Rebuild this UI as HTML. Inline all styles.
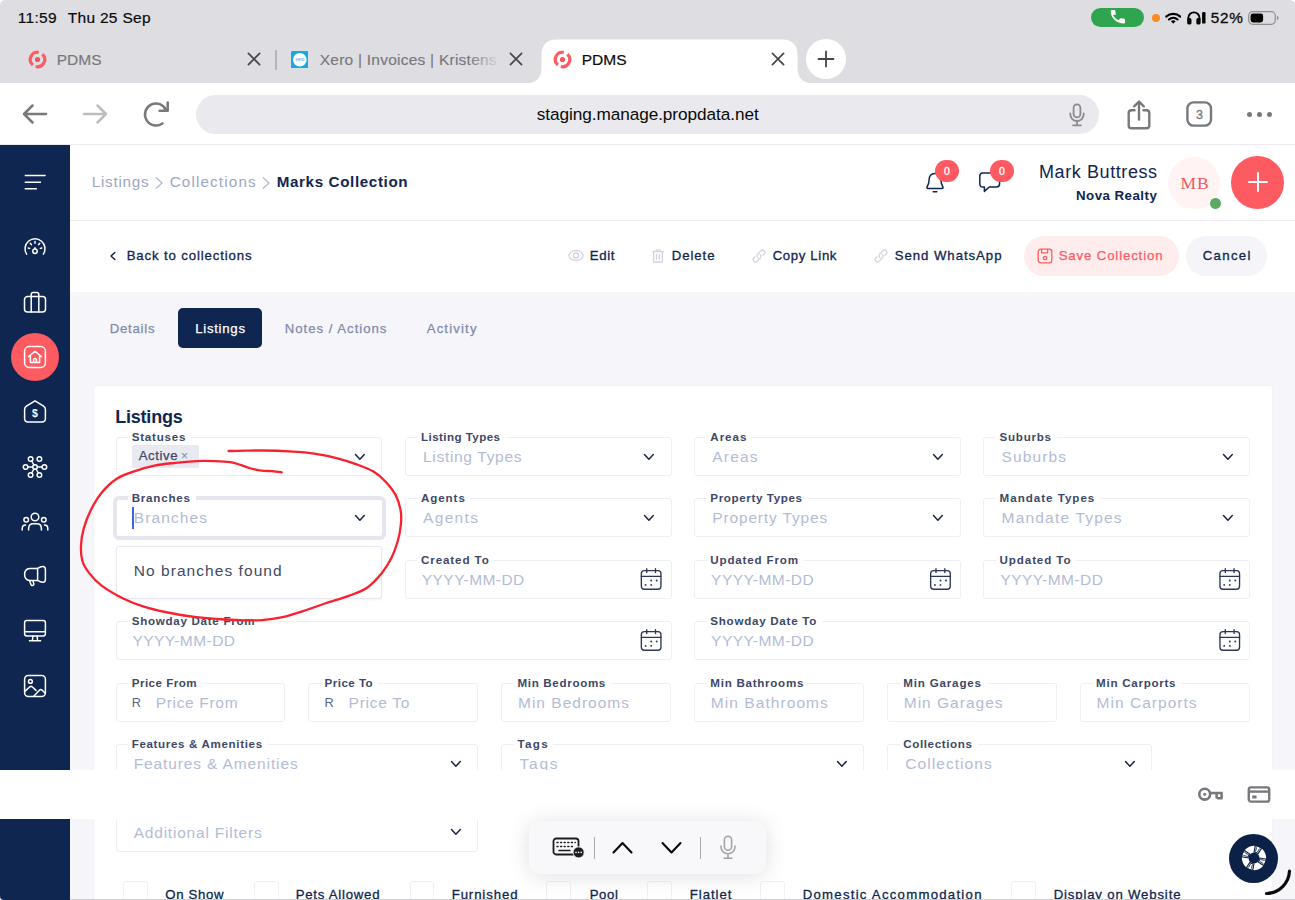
<!DOCTYPE html>
<html lang="en"><head><meta charset="utf-8"><title>PDMS</title>
<style>
*{box-sizing:border-box;margin:0;padding:0}
html,body{width:1295px;height:900px;overflow:hidden;background:#f5f5fa}
body{position:relative;font-family:"Liberation Sans",sans-serif;}
.t{position:absolute;white-space:nowrap;line-height:1;}
.serif{font-family:"Liberation Serif",serif}
.fld{position:absolute;border:1px solid #eeeff5;border-radius:3px;background:#fff}
</style></head><body>
<div style="position:absolute;left:0.00px;top:0.00px;width:1295.00px;height:83.00px;background:#dddde2"></div>
<div style="position:absolute;left:0.00px;top:83.00px;width:1295.00px;height:62.00px;background:#fff"></div>
<div style="position:absolute;left:0.00px;top:144.00px;width:1295.00px;height:1.00px;background:#ebebef"></div>
<div class="t" style="left:17.70px;top:10.00px;font-size:15.50px;color:#0a0a0a;letter-spacing:0.322px;-webkit-text-stroke:0.20px #0a0a0a;">11:59</div>
<div class="t" style="left:67.70px;top:10.00px;font-size:15.50px;color:#0a0a0a;letter-spacing:0.308px;-webkit-text-stroke:0.20px #0a0a0a;">Thu 25 Sep</div>
<div style="position:absolute;left:1091.00px;top:7.50px;width:52.50px;height:19.20px;background:#2fa550;border-radius:10px"></div>
<svg style="position:absolute;left:1110.00px;top:9.50px;" width="15.00" height="15.00" viewBox="0 0 17 16" fill="none"><path d="M6.6 10.8c2.9 5.6 7 9.7 12.600 12.600l4.200-4.200c.5-.5 1.300-.7 2-.4 2.100.7 4.400 1.100 6.800 1.100 1 0 1.900.9 1.900 1.900v6.700c0 1-.9 1.900-1.900 1.900C14.300 30.400 1.600 17.700 1.600 2 1.600 1 2.500.1 3.500.1h6.700c1 0 1.900.9 1.900 1.900 0 2.400.4 4.700 1.100 6.800.2.700 0 1.500-.5 2z" fill="#fff" transform="scale(.5) translate(0,-1)"/></svg>
<div style="position:absolute;left:1152.00px;top:14.00px;width:8.20px;height:8.20px;background:#fb8b1e;border-radius:50%"></div>
<svg style="position:absolute;left:1164.50px;top:11.50px;" width="16.50" height="12.00" viewBox="0 0 16.5 12" fill="none"><path d="M1.200 4.600 A10.500 10.500 0 0 1 15.300 4.600" stroke="#000" stroke-width="2.100" stroke-linecap="round"/><path d="M3.900 7.500 A6.600 6.600 0 0 1 12.600 7.500" stroke="#000" stroke-width="2.100" stroke-linecap="round"/><path d="M8.250 11.700 L5.900 9.300 A3.400 3.400 0 0 1 10.600 9.300 Z" fill="#000"/></svg>
<svg style="position:absolute;left:1186.00px;top:10.00px;" width="21.00" height="16.00" viewBox="0 0 21 16" fill="none"><path d="M2.300 10.500 V8 A5.600 5.600 0 0 1 13.500 8 V10.500" stroke="#000" stroke-width="1.900"/><rect x="1.200" y="8" width="4.300" height="6.600" rx="1.900" fill="#000"/><rect x="10.300" y="8" width="4.300" height="6.600" rx="1.900" fill="#000"/><rect x="16.100" y="2" width="3.400" height="11.600" rx="1.200" fill="#000"/></svg>
<div class="t" style="left:1210.70px;top:10.00px;font-size:15.30px;color:#0a0a0a;letter-spacing:0.747px;-webkit-text-stroke:0.30px #0a0a0a;">52%</div>
<svg style="position:absolute;left:1247.50px;top:11.00px;" width="32.00" height="14.00" viewBox="0 0 32 14" fill="none"><rect x=".7" y=".7" width="26.600" height="12.600" rx="4" stroke="#8e8e93" stroke-width="1.200"/><rect x="2.600" y="2.600" width="12.500" height="8.800" rx="2.400" fill="#000"/><path d="M29 4.800 q1.600.6 1.600 2.200 t-1.600 2.200z" fill="#8e8e93"/></svg>
<svg style="position:absolute;left:520px;top:36px" width="300" height="48" viewBox="520 36 300 48"><path d="M524 83.500 C535 83.500 541.500 79 541.500 68 L541.500 54 C541.500 45.500 547 39.500 556 39.500 L783 39.500 C792 39.500 797.500 45.500 797.500 54 L797.500 68 C797.500 79 804 83.500 815.500 83.500 Z" fill="#fff"/></svg>
<svg style="position:absolute;left:27.80px;top:49.60px;" width="19.00" height="19.00" viewBox="0 0 19 19" fill="none"><path d="M10.750 2.410 A7.200 7.200 0 0 0 4.870 15.020" stroke="#fd5b61" stroke-width="3.200"/><path d="M14.410 4.230 A7.200 7.200 0 0 1 7.760 16.490" stroke="#fd5b61" stroke-width="3.200"/><circle cx="9.500" cy="9.500" r="2.600" fill="#f4555b"/></svg>
<div class="t" style="left:56.70px;top:52.00px;font-size:15.50px;color:#77777c;letter-spacing:0.044px;-webkit-text-stroke:0.15px #77777c;">PDMS</div>
<svg style="position:absolute;left:246.00px;top:51.00px;" width="16.00" height="16.00" viewBox="0 0 16 16" fill="none"><path d="M2.400 2.400 L13.600 13.600 M13.600 2.400 L2.400 13.600" stroke="#45454a" stroke-width="1.700" stroke-linecap="round"/></svg>
<div style="position:absolute;left:275.40px;top:50.00px;width:1.30px;height:19.50px;background:#b4b4b9"></div>
<svg style="position:absolute;left:290.50px;top:50.50px;" width="17.60" height="17.60" viewBox="0 0 17.6 17.6" fill="none"><rect width="17.600" height="17.600" rx="1.500" fill="#1aa7e8"/><circle cx="8.800" cy="8.800" r="6.800" fill="#fff"/><text x="8.800" y="10.300" font-size="4.600" font-family="Liberation Sans, sans-serif" fill="#1aa7e8" text-anchor="middle">xero</text></svg>
<div class="t" style="left:319.70px;top:52.00px;font-size:15.50px;color:#77777c;letter-spacing:0.242px;-webkit-text-stroke:0.15px #77777c;">Xero | Invoices | Kristens</div>
<div style="position:absolute;left:468.00px;top:46.00px;width:30.00px;height:26.00px;background:linear-gradient(90deg,rgba(221,221,226,0),rgba(221,221,226,.9))"></div>
<svg style="position:absolute;left:507.50px;top:51.00px;" width="16.00" height="16.00" viewBox="0 0 16 16" fill="none"><path d="M2.400 2.400 L13.600 13.600 M13.600 2.400 L2.400 13.600" stroke="#45454a" stroke-width="1.700" stroke-linecap="round"/></svg>
<svg style="position:absolute;left:552.50px;top:49.60px;" width="19.00" height="19.00" viewBox="0 0 19 19" fill="none"><path d="M10.750 2.410 A7.200 7.200 0 0 0 4.870 15.020" stroke="#fd5b61" stroke-width="3.200"/><path d="M14.410 4.230 A7.200 7.200 0 0 1 7.760 16.490" stroke="#fd5b61" stroke-width="3.200"/><circle cx="9.500" cy="9.500" r="2.600" fill="#f4555b"/></svg>
<div class="t" style="left:581.70px;top:52.00px;font-size:15.50px;color:#0a0a0a;letter-spacing:0.044px;-webkit-text-stroke:0.20px #0a0a0a;">PDMS</div>
<svg style="position:absolute;left:770.00px;top:51.00px;" width="16.00" height="16.00" viewBox="0 0 16 16" fill="none"><path d="M2.400 2.400 L13.600 13.600 M13.600 2.400 L2.400 13.600" stroke="#45454a" stroke-width="1.700" stroke-linecap="round"/></svg>
<div style="position:absolute;left:806.30px;top:39.30px;width:39.50px;height:39.50px;background:#fff;border-radius:50%"></div>
<svg style="position:absolute;left:817.20px;top:50.00px;" width="18.00" height="18.00" viewBox="0 0 18 18" fill="none"><path d="M9 1.500 V16.500 M1.500 9 H16.500" stroke="#45454a" stroke-width="1.800" stroke-linecap="round"/></svg>
<svg style="position:absolute;left:21.00px;top:103.00px;" width="27.00" height="22.00" viewBox="0 0 27 22" fill="none"><path d="M25 11 H3 M11.500 2.500 L3 11 L11.500 19.500" stroke="#78787d" stroke-width="2.500" stroke-linecap="round" stroke-linejoin="round"/></svg>
<svg style="position:absolute;left:82.00px;top:103.00px;" width="27.00" height="22.00" viewBox="0 0 27 22" fill="none"><path d="M2 11 H24 M15.500 2.500 L24 11 L15.500 19.500" stroke="#bcbcc1" stroke-width="2.500" stroke-linecap="round" stroke-linejoin="round"/></svg>
<svg style="position:absolute;left:142.00px;top:100.00px;" width="28.00" height="28.00" viewBox="0 0 28 28" fill="none"><path d="M24.200 10.300 A11 11 0 1 0 20.400 23.400" stroke="#78787d" stroke-width="2.500" stroke-linecap="round"/><path d="M25.700 2.600 V10.700 H17.600" stroke="#78787d" stroke-width="2.500" stroke-linecap="round" stroke-linejoin="round"/></svg>
<div style="position:absolute;left:196.00px;top:94.50px;width:902.50px;height:39.50px;background:#e9e9ee;border-radius:20px"></div>
<div class="t" style="left:536.70px;top:106.00px;font-size:17.20px;color:#0a0a0a;letter-spacing:-0.061px;">staging.manage.propdata.net</div>
<svg style="position:absolute;left:1068.00px;top:102.50px;" width="18.00" height="24.00" viewBox="0 0 18 24" fill="none"><rect x="5.600" y="1.300" width="6.800" height="13" rx="3.400" stroke="#8a8a8f" stroke-width="1.800"/><path d="M2.300 10.500 V11.300 A6.700 6.700 0 0 0 15.700 11.300 V10.500 M9 18 V22 M5 22.300 H13" stroke="#8a8a8f" stroke-width="1.800" stroke-linecap="round"/></svg>
<svg style="position:absolute;left:1125.50px;top:98.50px;" width="26.00" height="32.00" viewBox="0 0 26 32" fill="none"><path d="M8.500 11.300 H5.500 Q2.700 11.300 2.700 14.100 V26.500 Q2.700 29.300 5.500 29.300 H20.500 Q23.300 29.300 23.300 26.500 V14.100 Q23.300 11.300 20.500 11.300 H17.500" stroke="#78787d" stroke-width="2.400" stroke-linecap="round"/><path d="M13 20.500 V2.800 M8.200 7.300 L13 2.500 L17.800 7.300" stroke="#78787d" stroke-width="2.400" stroke-linecap="round" stroke-linejoin="round"/></svg>
<svg style="position:absolute;left:1184.00px;top:99.00px;" width="30.00" height="30.00" viewBox="0 0 30 30" fill="none"><rect x="3.400" y="3.400" width="23.600" height="23.200" rx="6.200" stroke="#78787d" stroke-width="2.400"/></svg>
<div class="t" style="left:1195.92px;top:109.00px;font-size:12.50px;color:#78787d;-webkit-text-stroke:0.30px #78787d;">3</div>
<div style="position:absolute;left:1246.70px;top:111.50px;width:5.00px;height:5.00px;background:#78787d;border-radius:50%"></div>
<div style="position:absolute;left:1256.70px;top:111.50px;width:5.00px;height:5.00px;background:#78787d;border-radius:50%"></div>
<div style="position:absolute;left:1266.70px;top:111.50px;width:5.00px;height:5.00px;background:#78787d;border-radius:50%"></div>
<div style="position:absolute;left:70.00px;top:145.00px;width:1225.00px;height:74.50px;background:#fff"></div>
<div style="position:absolute;left:70.00px;top:219.50px;width:1225.00px;height:1.00px;background:#ececf2"></div>
<div style="position:absolute;left:70.00px;top:220.50px;width:1225.00px;height:71.50px;background:#fff"></div>
<div style="position:absolute;left:0.00px;top:145.00px;width:70.00px;height:755.00px;background:#0f2651;border-bottom-left-radius:4px"></div>
<svg style="position:absolute;left:23.00px;top:172.00px;" width="26.00" height="20.00" viewBox="0 0 26 20" fill="none"><path d="M1.700 3.600 H22.700 M1.700 10.200 H18 M1.700 16.700 H13.800" stroke="#fff" stroke-width="1.500"/></svg>
<svg style="position:absolute;left:23.00px;top:235.00px;" width="24.00" height="22.00" viewBox="0 0 24 22" fill="none"><path d="M3.600 19.200 A10 10 0 1 1 20.400 19.200" stroke="#fff" stroke-width="1.500" stroke-linecap="round" stroke-linejoin="round"/><circle cx="12" cy="16.200" r="2.200" stroke="#fff" stroke-width="1.500" stroke-linecap="round" stroke-linejoin="round"/><path d="M12 14 V12.800 M12 6.600 V8.200 M7.400 8.400 L8.400 9.600 M16.600 8.400 L15.600 9.600 M5.200 13 L6.600 13.400 M18.800 13 L17.400 13.400" stroke="#fff" stroke-width="1.500" stroke-linecap="round" stroke-linejoin="round"/></svg>
<svg style="position:absolute;left:23.00px;top:290.00px;" width="24.00" height="24.00" viewBox="0 0 24 24" fill="none"><rect x="1.500" y="6.600" width="21" height="15.400" rx="3" stroke="#fff" stroke-width="1.500" stroke-linecap="round" stroke-linejoin="round"/><path d="M8.200 6.600 V4.600 Q8.200 2.600 10.200 2.600 H13.800 Q15.800 2.600 15.800 4.600 V6.600 M8.200 6.600 V22 M15.800 6.600 V22" stroke="#fff" stroke-width="1.500" stroke-linecap="round" stroke-linejoin="round"/></svg>
<div style="position:absolute;left:11.00px;top:332.60px;width:48.00px;height:48.00px;background:#fd5b61;border-radius:50%"></div>
<svg style="position:absolute;left:23.00px;top:344.60px;" width="24.00" height="24.00" viewBox="0 0 24 24" fill="none"><rect x="1.600" y="1.600" width="20.800" height="20.800" rx="4.500" stroke="#fff" stroke-width="1.500" stroke-linecap="round" stroke-linejoin="round"/><path d="M5.600 11.600 L12 6.200 L18.400 11.600 M7.400 10.400 V17.600 H16.600 V10.400 M10.600 17.600 V14.600 Q10.600 13.400 12 13.400 Q13.400 13.400 13.400 14.600 V17.600" stroke="#fff" stroke-width="1.500" stroke-linecap="round" stroke-linejoin="round"/></svg>
<svg style="position:absolute;left:23.00px;top:399.00px;" width="24.00" height="25.00" viewBox="0 0 24 25" fill="none"><path d="M12 1.800 L20.600 7.200 Q22.400 8.400 22.400 10.400 V19.600 Q22.400 23 19 23 H5 Q1.600 23 1.600 19.600 V10.400 Q1.600 8.400 3.400 7.200 Z" stroke="#fff" stroke-width="1.500" stroke-linecap="round" stroke-linejoin="round"/><text x="12" y="18.200" font-size="10.500" font-weight="700" font-family="Liberation Sans, sans-serif" fill="#fff" text-anchor="middle">$</text></svg>
<svg style="position:absolute;left:22.00px;top:455.00px;" width="26.00" height="24.00" viewBox="0 0 26 24" fill="none"><circle cx="13" cy="12" r="2.300" stroke="#fff" stroke-width="1.500" stroke-linecap="round" stroke-linejoin="round"/><circle cx="8.600" cy="4" r="2.300" stroke="#fff" stroke-width="1.500" stroke-linecap="round" stroke-linejoin="round"/><circle cx="17.400" cy="4" r="2.300" stroke="#fff" stroke-width="1.500" stroke-linecap="round" stroke-linejoin="round"/><circle cx="3.600" cy="12" r="2.300" stroke="#fff" stroke-width="1.500" stroke-linecap="round" stroke-linejoin="round"/><circle cx="22.400" cy="12" r="2.300" stroke="#fff" stroke-width="1.500" stroke-linecap="round" stroke-linejoin="round"/><circle cx="8.600" cy="20" r="2.300" stroke="#fff" stroke-width="1.500" stroke-linecap="round" stroke-linejoin="round"/><circle cx="17.400" cy="20" r="2.300" stroke="#fff" stroke-width="1.500" stroke-linecap="round" stroke-linejoin="round"/><path d="M5.900 12 H10.700 M15.300 12 H20.100 M11.900 10 L9.700 6 M11.900 14 L9.700 18 M14.100 14 L16.300 18" stroke="#fff" stroke-width="1.500" stroke-linecap="round" stroke-linejoin="round"/></svg>
<svg style="position:absolute;left:21.00px;top:511.00px;" width="28.00" height="21.00" viewBox="0 0 28 21" fill="none"><circle cx="14" cy="6" r="3.800" stroke="#fff" stroke-width="1.500" stroke-linecap="round" stroke-linejoin="round"/><path d="M7.600 19 V17.400 Q7.600 12.800 12.200 12.800 H15.800 Q20.400 12.800 20.400 17.400 V19" stroke="#fff" stroke-width="1.500" stroke-linecap="round" stroke-linejoin="round"/><circle cx="5.200" cy="8.800" r="2.300" stroke="#fff" stroke-width="1.500" stroke-linecap="round" stroke-linejoin="round"/><circle cx="22.800" cy="8.800" r="2.300" stroke="#fff" stroke-width="1.500" stroke-linecap="round" stroke-linejoin="round"/><path d="M1.200 19 V17.600 Q1.200 14 4.600 14 M26.800 19 V17.600 Q26.800 14 23.400 14" stroke="#fff" stroke-width="1.500" stroke-linecap="round" stroke-linejoin="round"/></svg>
<svg style="position:absolute;left:23.00px;top:565.00px;" width="24.00" height="22.00" viewBox="0 0 24 22" fill="none"><path d="M14.600 3.400 Q18 1.200 20.400 1.600 Q22.400 2 22.400 4.400 V14.400 Q22.400 16.800 20.400 17.200 Q18 17.600 14.600 15.400 Z" stroke="#fff" stroke-width="1.500" stroke-linecap="round" stroke-linejoin="round"/><path d="M14.600 3.400 H6.800 Q1.600 3.800 1.600 9.400 Q1.600 15 6.800 15.400 H14.600 M6.400 15.400 L8 19.600 Q8.600 21 10 20.400 Q11.200 19.800 10.800 18.400 L9.800 15.400" stroke="#fff" stroke-width="1.500" stroke-linecap="round" stroke-linejoin="round"/></svg>
<svg style="position:absolute;left:23.00px;top:619.00px;" width="24.00" height="24.00" viewBox="0 0 24 24" fill="none"><rect x="1.600" y="1.600" width="20.800" height="15.400" rx="2.200" stroke="#fff" stroke-width="1.500" stroke-linecap="round" stroke-linejoin="round"/><path d="M1.600 12.800 H22.400 M10 17 L9.400 21.400 M14 17 L14.600 21.400 M6.400 21.800 H17.600" stroke="#fff" stroke-width="1.500" stroke-linecap="round" stroke-linejoin="round"/></svg>
<svg style="position:absolute;left:23.00px;top:674.00px;" width="24.00" height="24.00" viewBox="0 0 24 24" fill="none"><rect x="1.600" y="1.600" width="20.800" height="20.800" rx="3.600" stroke="#fff" stroke-width="1.500" stroke-linecap="round" stroke-linejoin="round"/><circle cx="7.400" cy="7.400" r="1.900" stroke="#fff" stroke-width="1.500" stroke-linecap="round" stroke-linejoin="round"/><path d="M1.800 17.400 L6.600 13 Q8 11.800 9.400 13 L13 16.400 M11 22 L16.400 16.200 Q17.800 14.800 19.200 16.200 L22.200 19.200" stroke="#fff" stroke-width="1.500" stroke-linecap="round" stroke-linejoin="round"/></svg>
<div class="t" style="left:91.70px;top:174.00px;font-size:15.20px;color:#9aa6c4;letter-spacing:0.773px;">Listings</div>
<svg style="position:absolute;left:154.00px;top:175.50px;" width="10.00" height="14.00" viewBox="0 0 10 14" fill="none"><path d="M2.200 1.600 L8 7 L2.200 12.400" stroke="#aab4cd" stroke-width="1.200" stroke-linecap="round" stroke-linejoin="round"/></svg>
<div class="t" style="left:169.70px;top:174.00px;font-size:15.20px;color:#9aa6c4;letter-spacing:1.162px;">Collections</div>
<svg style="position:absolute;left:261.00px;top:175.50px;" width="10.00" height="14.00" viewBox="0 0 10 14" fill="none"><path d="M2.200 1.600 L8 7 L2.200 12.400" stroke="#aab4cd" stroke-width="1.200" stroke-linecap="round" stroke-linejoin="round"/></svg>
<div class="t" style="left:276.70px;top:174.00px;font-size:15.20px;color:#0f2651;letter-spacing:0.625px;font-weight:700;">Marks Collection</div>
<svg style="position:absolute;left:923.00px;top:169.00px;" width="24.00" height="25.00" viewBox="0 0 24 25" fill="none"><path d="M5.200 19.400 Q3.200 19.400 4.200 17.600 Q6 14.600 6 11.400 Q6 4.400 12 4.400 Q18 4.400 18 11.400 Q18 14.600 19.800 17.600 Q20.800 19.400 18.800 19.400 Z" stroke="#0f2651" stroke-width="1.500" stroke-linecap="round" stroke-linejoin="round"/><path d="M10.200 22.800 H13.800" stroke="#0f2651" stroke-width="1.500" stroke-linecap="round" stroke-linejoin="round"/></svg>
<svg style="position:absolute;left:977.00px;top:170.00px;" width="26.00" height="24.00" viewBox="0 0 26 24" fill="none"><path d="M6 3 H19.400 Q22.600 3 22.600 6.200 V13.800 Q22.600 17 19.400 17 H12.200 L7.400 21.400 V17 H6 Q2.800 17 2.800 13.800 V6.200 Q2.800 3 6 3 Z" stroke="#0f2651" stroke-width="1.500" stroke-linecap="round" stroke-linejoin="round"/></svg>
<div style="position:absolute;left:935.00px;top:160.30px;width:24.00px;height:21.80px;background:#fd5b61;border-radius:11px"></div>
<div class="t" style="left:944.08px;top:166.00px;font-size:10.50px;color:#fff;-webkit-text-stroke:0.30px #fff;">0</div>
<div style="position:absolute;left:989.80px;top:160.30px;width:24.00px;height:21.80px;background:#fd5b61;border-radius:11px"></div>
<div class="t" style="left:998.88px;top:166.00px;font-size:10.50px;color:#fff;-webkit-text-stroke:0.30px #fff;">0</div>
<div class="t" style="left:1039.00px;top:163.00px;font-size:18.00px;color:#0f2651;letter-spacing:0.587px;">Mark Buttress</div>
<div class="t" style="left:1076.00px;top:189.00px;font-size:13.30px;color:#0f2651;letter-spacing:0.467px;font-weight:700;">Nova Realty</div>
<div style="position:absolute;left:1167.80px;top:156.70px;width:52.00px;height:52.00px;background:#fff3f3;border-radius:50%"></div>
<div class="t serif" style="left:1180.50px;top:175.00px;font-size:17.50px;color:#f05a5f;letter-spacing:0.816px;">MB</div>
<div style="position:absolute;left:1208.50px;top:196.50px;width:13.00px;height:13.00px;background:#5aab61;border-radius:50%;border:1px solid #fff"></div>
<div style="position:absolute;left:1231.00px;top:155.60px;width:53.00px;height:53.00px;background:#fd5b61;border-radius:50%"></div>
<svg style="position:absolute;left:1246.50px;top:171.00px;" width="22.00" height="22.00" viewBox="0 0 22 22" fill="none"><path d="M11 2 V20 M2 11 H20" stroke="#fff" stroke-width="2" stroke-linecap="round"/></svg>
<svg style="position:absolute;left:108.50px;top:250.50px;" width="8.00" height="10.00" viewBox="0 0 8 10" fill="none"><path d="M5.800 1.500 L2 5 L5.800 8.500" stroke="#0f2651" stroke-width="1.500" stroke-linecap="round" stroke-linejoin="round"/></svg>
<div class="t" style="left:126.70px;top:249.00px;font-size:13.20px;color:#0f2651;letter-spacing:0.865px;-webkit-text-stroke:0.30px #0f2651;">Back to collections</div>
<svg style="position:absolute;left:568.00px;top:248.00px;" width="16.00" height="15.00" viewBox="0 0 16 15" fill="none"><ellipse cx="8" cy="7.500" rx="7" ry="5" stroke="#d2d4e0" stroke-width="1.300" stroke-linecap="round" stroke-linejoin="round"/><circle cx="8" cy="7.500" r="2.500" stroke="#d2d4e0" stroke-width="1.300" stroke-linecap="round" stroke-linejoin="round"/></svg>
<div class="t" style="left:589.70px;top:249.00px;font-size:13.20px;color:#0f2651;letter-spacing:0.686px;-webkit-text-stroke:0.30px #0f2651;">Edit</div>
<svg style="position:absolute;left:651.00px;top:247.50px;" width="14.00" height="16.00" viewBox="0 0 14 16" fill="none"><path d="M1.500 3.600 H12.500 M5 3.600 V1.800 H9 V3.600 M2.600 3.600 V14 H11.400 V3.600 M5.600 6.400 V11.400 M8.400 6.400 V11.400" stroke="#d2d4e0" stroke-width="1.300" stroke-linecap="round" stroke-linejoin="round"/></svg>
<div class="t" style="left:671.70px;top:249.00px;font-size:13.20px;color:#0f2651;letter-spacing:0.933px;-webkit-text-stroke:0.30px #0f2651;">Delete</div>
<svg style="position:absolute;left:750.50px;top:247.50px;" width="16.00" height="16.00" viewBox="0 0 16 16" fill="none"><path d="M6.800 9.200 Q5.200 7.600 6.800 6 L10 2.800 Q11.600 1.200 13.200 2.800 Q14.800 4.400 13.200 6 L12 7.200 M9.200 6.800 Q10.800 8.400 9.200 10 L6 13.200 Q4.400 14.800 2.800 13.200 Q1.200 11.600 2.800 10 L4 8.800" stroke="#d2d4e0" stroke-width="1.300" stroke-linecap="round" stroke-linejoin="round"/></svg>
<div class="t" style="left:772.70px;top:249.00px;font-size:13.20px;color:#0f2651;letter-spacing:0.642px;-webkit-text-stroke:0.30px #0f2651;">Copy Link</div>
<svg style="position:absolute;left:872.50px;top:247.50px;" width="16.00" height="16.00" viewBox="0 0 16 16" fill="none"><path d="M6.800 9.200 Q5.200 7.600 6.800 6 L10 2.800 Q11.600 1.200 13.200 2.800 Q14.800 4.400 13.200 6 L12 7.200 M9.200 6.800 Q10.800 8.400 9.200 10 L6 13.200 Q4.400 14.800 2.800 13.200 Q1.200 11.600 2.800 10 L4 8.800" stroke="#d2d4e0" stroke-width="1.300" stroke-linecap="round" stroke-linejoin="round"/></svg>
<div class="t" style="left:894.70px;top:249.00px;font-size:13.20px;color:#0f2651;letter-spacing:0.957px;-webkit-text-stroke:0.30px #0f2651;">Send WhatsApp</div>
<div style="position:absolute;left:1024.00px;top:236.00px;width:155.00px;height:39.50px;background:#ffeced;border-radius:20px"></div>
<svg style="position:absolute;left:1036.50px;top:247.50px;" width="16.00" height="16.00" viewBox="0 0 16 16" fill="none"><rect x="1.200" y="1.200" width="13.600" height="13.600" rx="2.600" stroke="#fd5b61" stroke-width="1.300" stroke-linecap="round" stroke-linejoin="round"/><path d="M4.600 1.400 V4.800 H10.600 V1.400" stroke="#fd5b61" stroke-width="1.300" stroke-linecap="round" stroke-linejoin="round"/><circle cx="8" cy="10" r="1.700" stroke="#fd5b61" stroke-width="1.300" stroke-linecap="round" stroke-linejoin="round"/></svg>
<div class="t" style="left:1058.70px;top:249.00px;font-size:13.20px;color:#fd5b61;letter-spacing:0.868px;-webkit-text-stroke:0.25px #fd5b61;">Save Collection</div>
<div style="position:absolute;left:1186.00px;top:236.00px;width:81.00px;height:39.50px;background:#f4f4f9;border-radius:20px"></div>
<div class="t" style="left:1202.70px;top:249.00px;font-size:13.20px;color:#0f2651;letter-spacing:1.346px;-webkit-text-stroke:0.30px #0f2651;">Cancel</div>
<div style="position:absolute;left:70.00px;top:292.00px;width:1225.00px;height:608.00px;background:#f5f5fa"></div>
<div class="t" style="left:109.70px;top:322.00px;font-size:13.20px;color:#7f8bab;letter-spacing:0.747px;-webkit-text-stroke:0.25px #7f8bab;">Details</div>
<div style="position:absolute;left:178.00px;top:308.40px;width:84.00px;height:39.20px;background:#0f2651;border-radius:5px"></div>
<div class="t" style="left:195.20px;top:322.00px;font-size:13.20px;color:#fff;letter-spacing:0.725px;-webkit-text-stroke:0.25px #fff;">Listings</div>
<div class="t" style="left:284.70px;top:322.00px;font-size:13.20px;color:#7f8bab;letter-spacing:0.987px;-webkit-text-stroke:0.25px #7f8bab;">Notes / Actions</div>
<div class="t" style="left:426.70px;top:322.00px;font-size:13.20px;color:#7f8bab;letter-spacing:1.147px;-webkit-text-stroke:0.25px #7f8bab;">Activity</div>
<div style="position:absolute;left:93.50px;top:385.50px;width:1178.50px;height:520.00px;background:#fff;border-radius:3px;box-shadow:0 0 3px rgba(60,70,110,.04)"></div>
<div class="t" style="left:115.20px;top:408.00px;font-size:18.00px;color:#0f2651;letter-spacing:-0.205px;font-weight:700;">Listings</div>
<div class="fld" style="left:116.00px;top:437.00px;width:266.00px;height:39.00px;"></div>
<div style="position:absolute;left:128.00px;top:431.30px;width:63.01px;height:12.00px;background:#fff"></div>
<div class="t" style="left:131.70px;top:431.00px;font-size:11.60px;color:#3d4867;letter-spacing:0.769px;font-weight:700;">Statuses</div>
<svg style="position:absolute;left:353.80px;top:452.65px;" width="11.80" height="7.70" viewBox="0 0 11.8 7.7" fill="none"><path d="M1.500 1.500 L5.90 6.20 L10.30 1.500" stroke="#1a2340" stroke-width="1.50" stroke-linecap="round" stroke-linejoin="round"/></svg>
<div style="position:absolute;left:132.00px;top:444.70px;width:66.70px;height:23.00px;background:#e8e9f1;border-radius:2px"></div>
<div class="t" style="left:138.70px;top:449.00px;font-size:13.20px;color:#3d4867;letter-spacing:0.574px;-webkit-text-stroke:0.25px #3d4867;">Active</div>
<div class="t" style="left:180.70px;top:450.00px;font-size:12.50px;color:#7d89ab;">×</div>
<div class="fld" style="left:405.00px;top:437.00px;width:267.00px;height:39.00px;"></div>
<div style="position:absolute;left:417.30px;top:431.30px;width:88.33px;height:12.00px;background:#fff"></div>
<div class="t" style="left:421.00px;top:431.00px;font-size:11.60px;color:#3d4867;letter-spacing:0.429px;font-weight:700;">Listing Types</div>
<div class="t" style="left:423.00px;top:449.00px;font-size:15.50px;color:#b3bcd5;letter-spacing:0.692px;">Listing Types</div>
<svg style="position:absolute;left:643.10px;top:452.65px;" width="11.80" height="7.70" viewBox="0 0 11.8 7.7" fill="none"><path d="M1.500 1.500 L5.90 6.20 L10.30 1.500" stroke="#1a2340" stroke-width="1.50" stroke-linecap="round" stroke-linejoin="round"/></svg>
<div class="fld" style="left:694.00px;top:437.00px;width:267.00px;height:39.00px;"></div>
<div style="position:absolute;left:706.60px;top:431.30px;width:45.41px;height:12.00px;background:#fff"></div>
<div class="t" style="left:710.30px;top:431.00px;font-size:11.60px;color:#3d4867;letter-spacing:0.969px;font-weight:700;">Areas</div>
<div class="t" style="left:712.30px;top:449.00px;font-size:15.50px;color:#b3bcd5;letter-spacing:1.174px;">Areas</div>
<svg style="position:absolute;left:932.40px;top:452.65px;" width="11.80" height="7.70" viewBox="0 0 11.8 7.7" fill="none"><path d="M1.500 1.500 L5.90 6.20 L10.30 1.500" stroke="#1a2340" stroke-width="1.50" stroke-linecap="round" stroke-linejoin="round"/></svg>
<div class="fld" style="left:983.00px;top:437.00px;width:267.00px;height:39.00px;"></div>
<div style="position:absolute;left:995.90px;top:431.30px;width:60.68px;height:12.00px;background:#fff"></div>
<div class="t" style="left:999.60px;top:431.00px;font-size:11.60px;color:#3d4867;letter-spacing:0.724px;font-weight:700;">Suburbs</div>
<div class="t" style="left:1001.60px;top:449.00px;font-size:15.50px;color:#b3bcd5;letter-spacing:1.126px;">Suburbs</div>
<svg style="position:absolute;left:1221.70px;top:452.65px;" width="11.80" height="7.70" viewBox="0 0 11.8 7.7" fill="none"><path d="M1.500 1.500 L5.90 6.20 L10.30 1.500" stroke="#1a2340" stroke-width="1.50" stroke-linecap="round" stroke-linejoin="round"/></svg>
<div style="position:absolute;left:112.50px;top:495.60px;width:273.00px;height:44.30px;border:4px solid #e5e6ee;border-radius:6px;background:#fff"></div>
<div style="position:absolute;left:128.00px;top:492.60px;width:67.56px;height:12.00px;background:#fff"></div>
<div class="t" style="left:131.70px;top:492.00px;font-size:11.60px;color:#3d4867;letter-spacing:0.773px;font-weight:700;">Branches</div>
<div class="t" style="left:133.70px;top:510.00px;font-size:15.50px;color:#b3bcd5;letter-spacing:1.132px;">Branches</div>
<svg style="position:absolute;left:353.80px;top:513.95px;" width="11.80" height="7.70" viewBox="0 0 11.8 7.7" fill="none"><path d="M1.500 1.500 L5.90 6.20 L10.30 1.500" stroke="#1a2340" stroke-width="1.50" stroke-linecap="round" stroke-linejoin="round"/></svg>
<div style="position:absolute;left:131.50px;top:507.00px;width:2.20px;height:21.50px;background:#3f63e8"></div>
<div class="fld" style="left:405.00px;top:498.00px;width:267.00px;height:39.00px;"></div>
<div style="position:absolute;left:417.30px;top:492.60px;width:53.13px;height:12.00px;background:#fff"></div>
<div class="t" style="left:421.00px;top:492.00px;font-size:11.60px;color:#3d4867;letter-spacing:0.906px;font-weight:700;">Agents</div>
<div class="t" style="left:423.00px;top:510.00px;font-size:15.50px;color:#b3bcd5;letter-spacing:1.335px;">Agents</div>
<svg style="position:absolute;left:643.10px;top:513.95px;" width="11.80" height="7.70" viewBox="0 0 11.8 7.7" fill="none"><path d="M1.500 1.500 L5.90 6.20 L10.30 1.500" stroke="#1a2340" stroke-width="1.50" stroke-linecap="round" stroke-linejoin="round"/></svg>
<div class="fld" style="left:694.00px;top:498.00px;width:267.00px;height:39.00px;"></div>
<div style="position:absolute;left:706.60px;top:492.60px;width:100.95px;height:12.00px;background:#fff"></div>
<div class="t" style="left:710.30px;top:492.00px;font-size:11.60px;color:#3d4867;letter-spacing:0.623px;font-weight:700;">Property Types</div>
<div class="t" style="left:712.30px;top:510.00px;font-size:15.50px;color:#b3bcd5;letter-spacing:0.841px;">Property Types</div>
<svg style="position:absolute;left:932.40px;top:513.95px;" width="11.80" height="7.70" viewBox="0 0 11.8 7.7" fill="none"><path d="M1.500 1.500 L5.90 6.20 L10.30 1.500" stroke="#1a2340" stroke-width="1.50" stroke-linecap="round" stroke-linejoin="round"/></svg>
<div class="fld" style="left:983.00px;top:498.00px;width:267.00px;height:39.00px;"></div>
<div style="position:absolute;left:995.90px;top:492.60px;width:104.03px;height:12.00px;background:#fff"></div>
<div class="t" style="left:999.60px;top:492.00px;font-size:11.60px;color:#3d4867;letter-spacing:0.985px;font-weight:700;">Mandate Types</div>
<div class="t" style="left:1001.60px;top:510.00px;font-size:15.50px;color:#b3bcd5;letter-spacing:1.185px;">Mandate Types</div>
<svg style="position:absolute;left:1221.70px;top:513.95px;" width="11.80" height="7.70" viewBox="0 0 11.8 7.7" fill="none"><path d="M1.500 1.500 L5.90 6.20 L10.30 1.500" stroke="#1a2340" stroke-width="1.50" stroke-linecap="round" stroke-linejoin="round"/></svg>
<div class="fld" style="left:116.00px;top:560.00px;width:266.00px;height:39.00px;"></div>
<div style="position:absolute;left:128.00px;top:554.50px;width:93.84px;height:12.00px;background:#fff"></div>
<div class="t" style="left:131.70px;top:554.00px;font-size:11.60px;color:#3d4867;letter-spacing:0.832px;font-weight:700;">Created From</div>
<div class="t" style="left:132.50px;top:572.00px;font-size:15.50px;color:#b3bcd5;letter-spacing:0.448px;">YYYY-MM-DD</div>
<svg style="position:absolute;left:350.00px;top:568.00px;" width="24.00" height="24.00" viewBox="0 0 24 24" fill="none"><g transform="translate(0.10 0.00)"><rect x="1.950" y="2.550" width="19.600" height="18.700" rx="3" stroke="#2c3656" stroke-width="1.350" stroke-linecap="round" stroke-linejoin="round"/><path d="M1.950 8.400 H21.550 M7.300 .700 V4.600 M16.100 .700 V4.600" stroke="#2c3656" stroke-width="1.350" stroke-linecap="round" stroke-linejoin="round"/><g fill="#2c3656"><circle cx="11.800" cy="12.500" r=".950"/><circle cx="17.300" cy="12.500" r=".950"/><circle cx="6.200" cy="16.900" r=".950"/><circle cx="11.800" cy="16.900" r=".950"/></g></g></svg>
<div class="fld" style="left:405.00px;top:560.00px;width:267.00px;height:39.00px;"></div>
<div style="position:absolute;left:417.30px;top:554.50px;width:77.03px;height:12.00px;background:#fff"></div>
<div class="t" style="left:421.00px;top:554.00px;font-size:11.60px;color:#3d4867;letter-spacing:0.892px;font-weight:700;">Created To</div>
<div class="t" style="left:421.80px;top:572.00px;font-size:15.50px;color:#b3bcd5;letter-spacing:0.448px;">YYYY-MM-DD</div>
<svg style="position:absolute;left:639.00px;top:568.00px;" width="24.00" height="24.00" viewBox="0 0 24 24" fill="none"><g transform="translate(0.40 0.00)"><rect x="1.950" y="2.550" width="19.600" height="18.700" rx="3" stroke="#2c3656" stroke-width="1.350" stroke-linecap="round" stroke-linejoin="round"/><path d="M1.950 8.400 H21.550 M7.300 .700 V4.600 M16.100 .700 V4.600" stroke="#2c3656" stroke-width="1.350" stroke-linecap="round" stroke-linejoin="round"/><g fill="#2c3656"><circle cx="11.800" cy="12.500" r=".950"/><circle cx="17.300" cy="12.500" r=".950"/><circle cx="6.200" cy="16.900" r=".950"/><circle cx="11.800" cy="16.900" r=".950"/></g></g></svg>
<div class="fld" style="left:694.00px;top:560.00px;width:267.00px;height:39.00px;"></div>
<div style="position:absolute;left:706.60px;top:554.50px;width:97.00px;height:12.00px;background:#fff"></div>
<div class="t" style="left:710.30px;top:554.00px;font-size:11.60px;color:#3d4867;letter-spacing:0.828px;font-weight:700;">Updated From</div>
<div class="t" style="left:711.10px;top:572.00px;font-size:15.50px;color:#b3bcd5;letter-spacing:0.448px;">YYYY-MM-DD</div>
<svg style="position:absolute;left:929.00px;top:568.00px;" width="24.00" height="24.00" viewBox="0 0 24 24" fill="none"><g transform="translate(-0.30 0.00)"><rect x="1.950" y="2.550" width="19.600" height="18.700" rx="3" stroke="#2c3656" stroke-width="1.350" stroke-linecap="round" stroke-linejoin="round"/><path d="M1.950 8.400 H21.550 M7.300 .700 V4.600 M16.100 .700 V4.600" stroke="#2c3656" stroke-width="1.350" stroke-linecap="round" stroke-linejoin="round"/><g fill="#2c3656"><circle cx="11.800" cy="12.500" r=".950"/><circle cx="17.300" cy="12.500" r=".950"/><circle cx="6.200" cy="16.900" r=".950"/><circle cx="11.800" cy="16.900" r=".950"/></g></g></svg>
<div class="fld" style="left:983.00px;top:560.00px;width:267.00px;height:39.00px;"></div>
<div style="position:absolute;left:995.90px;top:554.50px;width:80.19px;height:12.00px;background:#fff"></div>
<div class="t" style="left:999.60px;top:554.00px;font-size:11.60px;color:#3d4867;letter-spacing:0.887px;font-weight:700;">Updated To</div>
<div class="t" style="left:1000.40px;top:572.00px;font-size:15.50px;color:#b3bcd5;letter-spacing:0.448px;">YYYY-MM-DD</div>
<svg style="position:absolute;left:1218.00px;top:568.00px;" width="24.00" height="24.00" viewBox="0 0 24 24" fill="none"><g transform="translate(0.00 0.00)"><rect x="1.950" y="2.550" width="19.600" height="18.700" rx="3" stroke="#2c3656" stroke-width="1.350" stroke-linecap="round" stroke-linejoin="round"/><path d="M1.950 8.400 H21.550 M7.300 .700 V4.600 M16.100 .700 V4.600" stroke="#2c3656" stroke-width="1.350" stroke-linecap="round" stroke-linejoin="round"/><g fill="#2c3656"><circle cx="11.800" cy="12.500" r=".950"/><circle cx="17.300" cy="12.500" r=".950"/><circle cx="6.200" cy="16.900" r=".950"/><circle cx="11.800" cy="16.900" r=".950"/></g></g></svg>
<div class="fld" style="left:116.00px;top:621.00px;width:556.00px;height:39.00px;"></div>
<div style="position:absolute;left:128.00px;top:615.50px;width:132.14px;height:12.00px;background:#fff"></div>
<div class="t" style="left:131.70px;top:615.00px;font-size:11.60px;color:#3d4867;letter-spacing:0.711px;font-weight:700;">Showday Date From</div>
<div class="t" style="left:132.50px;top:633.00px;font-size:15.50px;color:#b3bcd5;letter-spacing:0.448px;">YYYY-MM-DD</div>
<svg style="position:absolute;left:639.00px;top:629.00px;" width="24.00" height="24.00" viewBox="0 0 24 24" fill="none"><g transform="translate(0.40 0.00)"><rect x="1.950" y="2.550" width="19.600" height="18.700" rx="3" stroke="#2c3656" stroke-width="1.350" stroke-linecap="round" stroke-linejoin="round"/><path d="M1.950 8.400 H21.550 M7.300 .700 V4.600 M16.100 .700 V4.600" stroke="#2c3656" stroke-width="1.350" stroke-linecap="round" stroke-linejoin="round"/><g fill="#2c3656"><circle cx="11.800" cy="12.500" r=".950"/><circle cx="17.300" cy="12.500" r=".950"/><circle cx="6.200" cy="16.900" r=".950"/><circle cx="11.800" cy="16.900" r=".950"/></g></g></svg>
<div class="fld" style="left:694.00px;top:621.00px;width:556.00px;height:39.00px;"></div>
<div style="position:absolute;left:706.60px;top:615.50px;width:115.33px;height:12.00px;background:#fff"></div>
<div class="t" style="left:710.30px;top:615.00px;font-size:11.60px;color:#3d4867;letter-spacing:0.732px;font-weight:700;">Showday Date To</div>
<div class="t" style="left:711.10px;top:633.00px;font-size:15.50px;color:#b3bcd5;letter-spacing:0.448px;">YYYY-MM-DD</div>
<svg style="position:absolute;left:1218.00px;top:629.00px;" width="24.00" height="24.00" viewBox="0 0 24 24" fill="none"><g transform="translate(0.00 0.00)"><rect x="1.950" y="2.550" width="19.600" height="18.700" rx="3" stroke="#2c3656" stroke-width="1.350" stroke-linecap="round" stroke-linejoin="round"/><path d="M1.950 8.400 H21.550 M7.300 .700 V4.600 M16.100 .700 V4.600" stroke="#2c3656" stroke-width="1.350" stroke-linecap="round" stroke-linejoin="round"/><g fill="#2c3656"><circle cx="11.800" cy="12.500" r=".950"/><circle cx="17.300" cy="12.500" r=".950"/><circle cx="6.200" cy="16.900" r=".950"/><circle cx="11.800" cy="16.900" r=".950"/></g></g></svg>
<div class="fld" style="left:116.00px;top:683.00px;width:169.00px;height:39.00px;"></div>
<div style="position:absolute;left:128.00px;top:677.00px;width:74.21px;height:12.00px;background:#fff"></div>
<div class="t" style="left:131.70px;top:677.00px;font-size:11.60px;color:#3d4867;letter-spacing:0.481px;font-weight:700;">Price From</div>
<div class="t" style="left:155.70px;top:695.00px;font-size:15.50px;color:#b3bcd5;letter-spacing:0.675px;">Price From</div>
<div class="t" style="left:131.70px;top:697.00px;font-size:12.80px;color:#5a6688;">R</div>
<div class="fld" style="left:308.00px;top:683.00px;width:170.00px;height:39.00px;"></div>
<div style="position:absolute;left:320.88px;top:677.00px;width:57.40px;height:12.00px;background:#fff"></div>
<div class="t" style="left:324.58px;top:677.00px;font-size:11.60px;color:#3d4867;letter-spacing:0.458px;font-weight:700;">Price To</div>
<div class="t" style="left:348.58px;top:695.00px;font-size:15.50px;color:#b3bcd5;letter-spacing:0.721px;">Price To</div>
<div class="t" style="left:324.58px;top:697.00px;font-size:12.80px;color:#5a6688;">R</div>
<div class="fld" style="left:501.00px;top:683.00px;width:170.00px;height:39.00px;"></div>
<div style="position:absolute;left:513.76px;top:677.00px;width:97.18px;height:12.00px;background:#fff"></div>
<div class="t" style="left:517.46px;top:677.00px;font-size:11.60px;color:#3d4867;letter-spacing:0.668px;font-weight:700;">Min Bedrooms</div>
<div class="t" style="left:517.96px;top:695.00px;font-size:15.50px;color:#b3bcd5;letter-spacing:1.011px;">Min Bedrooms</div>
<div class="fld" style="left:694.00px;top:683.00px;width:170.00px;height:39.00px;"></div>
<div style="position:absolute;left:706.64px;top:677.00px;width:102.35px;height:12.00px;background:#fff"></div>
<div class="t" style="left:710.34px;top:677.00px;font-size:11.60px;color:#3d4867;letter-spacing:0.721px;font-weight:700;">Min Bathrooms</div>
<div class="t" style="left:710.84px;top:695.00px;font-size:15.50px;color:#b3bcd5;letter-spacing:1.063px;">Min Bathrooms</div>
<div class="fld" style="left:887.00px;top:683.00px;width:170.00px;height:39.00px;"></div>
<div style="position:absolute;left:899.52px;top:677.00px;width:87.10px;height:12.00px;background:#fff"></div>
<div class="t" style="left:903.22px;top:677.00px;font-size:11.60px;color:#3d4867;letter-spacing:0.820px;font-weight:700;">Min Garages</div>
<div class="t" style="left:903.72px;top:695.00px;font-size:15.50px;color:#b3bcd5;letter-spacing:1.007px;">Min Garages</div>
<div class="fld" style="left:1080.00px;top:683.00px;width:170.00px;height:39.00px;"></div>
<div style="position:absolute;left:1092.40px;top:677.00px;width:88.71px;height:12.00px;background:#fff"></div>
<div class="t" style="left:1096.10px;top:677.00px;font-size:11.60px;color:#3d4867;letter-spacing:0.719px;font-weight:700;">Min Carports</div>
<div class="t" style="left:1096.60px;top:695.00px;font-size:15.50px;color:#b3bcd5;letter-spacing:1.022px;">Min Carports</div>
<div class="fld" style="left:116.00px;top:744.00px;width:362.00px;height:39.00px;"></div>
<div style="position:absolute;left:128.00px;top:738.40px;width:139.71px;height:12.00px;background:#fff"></div>
<div class="t" style="left:131.70px;top:738.00px;font-size:11.60px;color:#3d4867;letter-spacing:0.647px;font-weight:700;">Features &amp; Amenities</div>
<div class="t" style="left:133.70px;top:756.00px;font-size:15.50px;color:#b3bcd5;letter-spacing:0.877px;">Features &amp; Amenities</div>
<svg style="position:absolute;left:449.80px;top:759.75px;" width="11.80" height="7.70" viewBox="0 0 11.8 7.7" fill="none"><path d="M1.500 1.500 L5.90 6.20 L10.30 1.500" stroke="#1a2340" stroke-width="1.50" stroke-linecap="round" stroke-linejoin="round"/></svg>
<div class="fld" style="left:501.00px;top:744.00px;width:363.00px;height:39.00px;"></div>
<div style="position:absolute;left:513.70px;top:738.40px;width:39.65px;height:12.00px;background:#fff"></div>
<div class="t" style="left:517.40px;top:738.00px;font-size:11.60px;color:#3d4867;letter-spacing:1.380px;font-weight:700;">Tags</div>
<div class="t" style="left:519.40px;top:756.00px;font-size:15.50px;color:#b3bcd5;letter-spacing:1.831px;">Tags</div>
<svg style="position:absolute;left:835.50px;top:759.75px;" width="11.80" height="7.70" viewBox="0 0 11.8 7.7" fill="none"><path d="M1.500 1.500 L5.90 6.20 L10.30 1.500" stroke="#1a2340" stroke-width="1.50" stroke-linecap="round" stroke-linejoin="round"/></svg>
<div class="fld" style="left:887.00px;top:744.00px;width:265.00px;height:39.00px;"></div>
<div style="position:absolute;left:899.50px;top:738.40px;width:78.09px;height:12.00px;background:#fff"></div>
<div class="t" style="left:903.20px;top:738.00px;font-size:11.60px;color:#3d4867;letter-spacing:0.628px;font-weight:700;">Collections</div>
<div class="t" style="left:905.20px;top:756.00px;font-size:15.50px;color:#b3bcd5;letter-spacing:1.076px;">Collections</div>
<svg style="position:absolute;left:1123.80px;top:759.75px;" width="11.80" height="7.70" viewBox="0 0 11.8 7.7" fill="none"><path d="M1.500 1.500 L5.90 6.20 L10.30 1.500" stroke="#1a2340" stroke-width="1.50" stroke-linecap="round" stroke-linejoin="round"/></svg>
<div class="fld" style="left:116.00px;top:813.00px;width:362.00px;height:39.00px;"></div>
<div class="t" style="left:133.70px;top:825.00px;font-size:15.50px;color:#b3bcd5;letter-spacing:0.791px;">Additional Filters</div>
<svg style="position:absolute;left:449.80px;top:828.35px;" width="11.80" height="7.70" viewBox="0 0 11.8 7.7" fill="none"><path d="M1.500 1.500 L5.90 6.20 L10.30 1.500" stroke="#1a2340" stroke-width="1.50" stroke-linecap="round" stroke-linejoin="round"/></svg>
<div style="position:absolute;left:116.00px;top:546.00px;width:265.60px;height:52.80px;background:#fff;border:1px solid #e7e8f1;border-radius:3px;box-shadow:0 1px 3px rgba(60,70,110,.06)"></div>
<div class="t" style="left:133.70px;top:563.00px;font-size:15.50px;color:#3f4a66;letter-spacing:1.059px;">No branches found</div>
<div style="position:absolute;left:123.00px;top:881.00px;width:24.50px;height:24.50px;border:1px solid #eff0f5;border-radius:3px;background:#fff"></div>
<div class="t" style="left:165.30px;top:888.00px;font-size:13.20px;color:#0f2651;letter-spacing:0.674px;-webkit-text-stroke:0.30px #0f2651;">On Show</div>
<div style="position:absolute;left:254.00px;top:881.00px;width:24.50px;height:24.50px;border:1px solid #eff0f5;border-radius:3px;background:#fff"></div>
<div class="t" style="left:295.70px;top:888.00px;font-size:13.20px;color:#0f2651;letter-spacing:0.752px;-webkit-text-stroke:0.30px #0f2651;">Pets Allowed</div>
<div style="position:absolute;left:409.50px;top:881.00px;width:24.50px;height:24.50px;border:1px solid #eff0f5;border-radius:3px;background:#fff"></div>
<div class="t" style="left:451.70px;top:888.00px;font-size:13.20px;color:#0f2651;letter-spacing:0.892px;-webkit-text-stroke:0.30px #0f2651;">Furnished</div>
<div style="position:absolute;left:546.00px;top:881.00px;width:24.50px;height:24.50px;border:1px solid #eff0f5;border-radius:3px;background:#fff"></div>
<div class="t" style="left:589.70px;top:888.00px;font-size:13.20px;color:#0f2651;letter-spacing:0.629px;-webkit-text-stroke:0.30px #0f2651;">Pool</div>
<div style="position:absolute;left:647.00px;top:881.00px;width:24.50px;height:24.50px;border:1px solid #eff0f5;border-radius:3px;background:#fff"></div>
<div class="t" style="left:689.70px;top:888.00px;font-size:13.20px;color:#0f2651;letter-spacing:0.978px;-webkit-text-stroke:0.30px #0f2651;">Flatlet</div>
<div style="position:absolute;left:760.00px;top:881.00px;width:24.50px;height:24.50px;border:1px solid #eff0f5;border-radius:3px;background:#fff"></div>
<div class="t" style="left:802.70px;top:888.00px;font-size:13.20px;color:#0f2651;letter-spacing:1.254px;-webkit-text-stroke:0.30px #0f2651;">Domestic Accommodation</div>
<div style="position:absolute;left:1011.00px;top:881.00px;width:24.50px;height:24.50px;border:1px solid #eff0f5;border-radius:3px;background:#fff"></div>
<div class="t" style="left:1053.70px;top:888.00px;font-size:13.20px;color:#0f2651;letter-spacing:0.832px;-webkit-text-stroke:0.30px #0f2651;">Display on Website</div>
<svg style="position:absolute;left:0;top:0" width="1295" height="900" viewBox="0 0 1295 900" fill="none"><path d="M228.6 451.0 C231.3 450.9 239.5 450.8 245.0 450.7 C250.5 450.6 253.6 450.4 261.6 450.5 C269.7 450.6 284.5 451.1 293.3 451.6 C302.1 452.1 307.4 452.6 314.4 453.7 C321.4 454.8 328.5 456.1 335.5 457.9 C342.5 459.7 350.3 462.0 356.6 464.3 C362.9 466.6 368.6 468.6 373.5 471.6 C378.4 474.6 382.4 478.3 386.1 482.2 C389.8 486.1 393.2 490.3 395.6 494.9 C398.0 499.5 399.6 504.7 400.5 509.6 C401.4 514.5 401.4 519.1 400.9 524.4 C400.4 529.7 399.3 535.7 397.7 541.3 C396.1 546.9 394.0 552.8 391.4 558.1 C388.8 563.4 385.9 568.0 381.9 572.9 C377.8 577.8 372.7 583.8 367.1 587.7 C361.5 591.6 355.1 593.5 348.1 596.1 C341.1 598.7 332.3 601.0 324.9 603.5 C317.5 606.0 310.8 608.6 303.8 610.9 C296.8 613.2 289.7 615.7 282.7 617.2 C275.7 618.8 268.6 619.7 261.6 620.2 C254.6 620.7 247.8 620.4 240.5 620.2 C233.2 620.0 225.3 619.5 218.0 619.0 C210.7 618.5 205.4 618.4 196.6 617.2 C187.8 616.0 173.8 613.8 165.0 612.0 C156.2 610.2 150.9 609.0 143.8 606.7 C136.8 604.4 129.7 601.7 122.7 598.2 C115.7 594.7 107.2 589.8 101.6 585.6 C96.0 581.4 92.2 577.1 89.0 572.9 C85.8 568.7 83.5 564.9 82.2 560.3 C80.9 555.7 80.8 550.8 81.0 545.5 C81.2 540.2 82.0 534.6 83.7 528.6 C85.4 522.6 88.1 515.6 91.1 509.6 C94.1 503.6 97.4 497.8 101.6 492.7 C105.8 487.6 111.1 482.5 116.4 479.0 C121.7 475.5 127.0 473.8 133.3 471.6 C139.6 469.4 147.4 467.2 154.4 465.7 C161.4 464.2 168.5 463.6 175.5 462.8 C182.5 462.0 190.0 461.4 196.6 461.1 C203.2 460.8 209.4 461.0 215.0 461.2 C220.6 461.4 225.8 461.6 230.0 462.2 C234.2 462.8 237.0 463.8 240.5 464.9 C244.0 465.9 247.6 467.6 251.1 468.5 C254.6 469.4 258.1 470.2 261.6 470.6 C265.1 471.1 268.9 470.9 272.2 471.2 C275.5 471.5 280.1 472.1 281.7 472.3" stroke="#f9202f" stroke-width="2.300" stroke-linecap="round" stroke-linejoin="round"/></svg>
<div style="position:absolute;left:0.00px;top:770.00px;width:70.00px;height:49.00px;background:#fff"></div>
<div style="position:absolute;left:70.00px;top:770.00px;width:1225.00px;height:49.00px;background:rgba(255,255,255,.95)"></div>
<svg style="position:absolute;left:1196.00px;top:784.00px;" width="30.00" height="20.00" viewBox="0 0 30 20" fill="none"><circle cx="8.700" cy="10.200" r="5.400" stroke="#77777c" stroke-width="2.600"/><circle cx="8.700" cy="10.200" r="1.500" fill="#77777c"/><path d="M14.400 8.900 H25.600 V14.300 M20.600 9.500 V13.400 M25.600 14.300 H22" stroke="#77777c" stroke-width="2.500" stroke-linejoin="round" stroke-linecap="round"/></svg>
<svg style="position:absolute;left:1246.00px;top:784.00px;" width="26.00" height="20.00" viewBox="0 0 26 20" fill="none"><rect x="2.800" y="3.400" width="20.400" height="14.200" rx="2.200" stroke="#77777c" stroke-width="2.400"/><path d="M2.800 7.600 H23.200" stroke="#77777c" stroke-width="2.400"/><rect x="6.200" y="11.400" width="4.400" height="3.200" rx=".5" fill="#77777c"/></svg>
<div style="position:absolute;left:528.80px;top:821.00px;width:237.70px;height:52.50px;background:#f8f8fa;border-radius:10px;box-shadow:0 2px 22px rgba(0,0,0,.13)"></div>
<svg style="position:absolute;left:552.00px;top:837.00px;" width="34.00" height="22.00" viewBox="0 0 34 22" fill="none"><rect x="1.500" y="1.500" width="25" height="16" rx="2.600" stroke="#1c1c1e" stroke-width="1.800" stroke-linecap="round" stroke-linejoin="round"/><path d="M5 5.600 H6 M8.600 5.600 H9.600 M12.200 5.600 H13.200 M15.800 5.600 H16.800 M19.400 5.600 H20.400 M23 5.600 H23.200 M5 9.400 H6 M8.600 9.400 H9.600 M12.200 9.400 H13.200 M15.800 9.400 H16.800 M19.400 9.400 H20.400 M7 13.400 H18" stroke="#1c1c1e" stroke-width="1.500" stroke-linecap="round"/><circle cx="26.600" cy="15.400" r="5.600" fill="#1c1c1e" stroke="#f8f8fa" stroke-width="1"/><circle cx="24" cy="15.400" r=".8" fill="#fff"/><circle cx="26.600" cy="15.400" r=".8" fill="#fff"/><circle cx="29.200" cy="15.400" r=".8" fill="#fff"/></svg>
<div style="position:absolute;left:594.00px;top:837.00px;width:1.20px;height:21.50px;background:#a9a9ae"></div>
<svg style="position:absolute;left:611.00px;top:840.00px;" width="23.00" height="15.00" viewBox="0 0 23 15" fill="none"><path d="M2.500 12.500 L11.500 3 L20.500 12.500" stroke="#0a0a0a" stroke-width="2.100" stroke-linecap="round" stroke-linejoin="round"/></svg>
<svg style="position:absolute;left:660.00px;top:840.00px;" width="23.00" height="15.00" viewBox="0 0 23 15" fill="none"><path d="M2.500 3 L11.500 12.500 L20.500 3" stroke="#0a0a0a" stroke-width="2.100" stroke-linecap="round" stroke-linejoin="round"/></svg>
<div style="position:absolute;left:699.50px;top:837.00px;width:1.20px;height:21.50px;background:#a9a9ae"></div>
<svg style="position:absolute;left:719.00px;top:835.00px;" width="18.00" height="25.00" viewBox="0 0 18 25" fill="none"><rect x="5.400" y="1.200" width="7.200" height="14" rx="3.600" stroke="#a3a3a8" stroke-width="1.600"/><path d="M2 11 V11.800 A7 7 0 0 0 16 11.800 V11 M9 19 V23 M5 23.300 H13" stroke="#a3a3a8" stroke-width="1.600" stroke-linecap="round"/></svg>
<div style="position:absolute;left:1229.00px;top:834.00px;width:49.40px;height:49.40px;background:#0c2148;border-radius:50%"></div>
<svg style="position:absolute;left:1237.90px;top:842.30px;" width="32.00" height="32.00" viewBox="0 0 32 32" fill="none"><g transform="rotate(22 16 16)"><circle cx="16" cy="16" r="8.800" stroke="#fff" stroke-width="6.600"/><g stroke="#0c2148" stroke-width="1.100" fill="none"><path d="M12.600 4.200 Q16 3 19.400 4.200 L18.200 10.400 Q16 9.700 13.800 10.400 Z"/><path d="M12.600 27.800 Q16 29 19.400 27.800 L18.200 21.600 Q16 22.300 13.800 21.600 Z"/><path d="M4.200 12.600 Q3 16 4.200 19.400 L10.400 18.200 Q9.700 16 10.400 13.800 Z"/><path d="M27.800 12.600 Q29 16 27.800 19.400 L21.600 18.200 Q22.300 16 21.600 13.800 Z"/><path d="M14.400 5.200 L15 9.400 M17.600 5.200 L17 9.400 M14.400 26.800 L15 22.600 M17.600 26.800 L17 22.600 M5.200 14.400 L9.400 15 M5.200 17.600 L9.400 17 M26.800 14.400 L22.600 15 M26.800 17.600 L22.600 17" stroke-width=".8"/></g></g></svg>
<svg style="position:absolute;left:1255.00px;top:860.00px;" width="40.00" height="40.00" viewBox="0 0 40 40" fill="none"><path d="M34.500 11 A23.500 23.500 0 0 1 11.500 33.500" stroke="#0a0a0a" stroke-width="3.200" stroke-linecap="round"/></svg>
<div style="position:absolute;left:70.00px;top:899.00px;width:1225.00px;height:1.00px;background:#cfcfd3"></div>
<div style="position:absolute;left:0.00px;top:0.00px;width:4.00px;height:4.00px;background:radial-gradient(circle at 100% 100%,rgba(255,255,255,0) 3.2px,#fff 4px)"></div>
<div style="position:absolute;left:1291.00px;top:0.00px;width:4.00px;height:4.00px;background:radial-gradient(circle at 0 100%,rgba(255,255,255,0) 3.2px,#fff 4px)"></div>
</body></html>
